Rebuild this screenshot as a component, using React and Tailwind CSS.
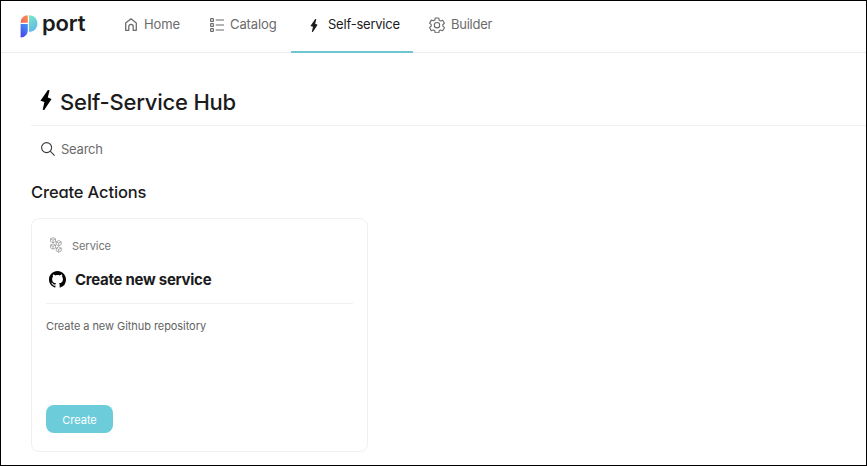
import React from "react";

function Bolt({ className }) {
  return (
    <svg viewBox="0 0 10 18" className={className} fill="currentColor">
      <path d="M6.7 0 8.2.2 6.6 6.7 10 8 3.4 18 2 17.7 3.6 10.8 0 9.7Z" />
    </svg>
  );
}

function Logo() {
  return (
    <svg viewBox="0 0 18 23" className="h-[23px] w-[18px] shrink-0">
      <defs>
        <linearGradient id="orange" x1="0" y1="1" x2="1" y2="0">
          <stop offset="0" stopColor="#f5625c" />
          <stop offset="1" stopColor="#fb924c" />
        </linearGradient>
        <linearGradient id="teal" x1="0.3" y1="0" x2="0.6" y2="1">
          <stop offset="0" stopColor="#79e6c8" />
          <stop offset="1" stopColor="#5fb5e8" />
        </linearGradient>
        <linearGradient id="blue" x1="0.3" y1="1" x2="0.7" y2="0">
          <stop offset="0" stopColor="#4a43ea" />
          <stop offset="1" stopColor="#4292f5" />
        </linearGradient>
      </defs>
      <path d="M7.8 0.3V7.7H0.6C0.6 3.7 3.6 0.3 7.8 0.3Z" fill="url(#orange)" />
      <path d="M9 0.3C14 0.3 17.4 3.8 17.4 8.4S14 16.7 9 16.7Z" fill="url(#teal)" />
      <path d="M0.6 9H7.8V15C7.8 19.3 4.8 22.5 0.6 22.5Z" fill="url(#blue)" />
    </svg>
  );
}

function HomeIcon() {
  return (
    <svg viewBox="0 0 12 13" className="mb-px h-[13px] w-3 shrink-0" fill="none" stroke="currentColor" strokeWidth="1.3">
      <path d="M.7 5 6 .8 11.3 5V12.3H8.2V8.6C8.2 7.3 7.3 6.4 6 6.4S3.8 7.3 3.8 8.6V12.3H.7Z" strokeLinejoin="round" />
    </svg>
  );
}

function CatalogIcon() {
  return (
    <svg viewBox="0 0 14 14" className="h-3.5 w-3.5 shrink-0" fill="none" stroke="currentColor" strokeWidth="1.1">
      <rect x=".6" y=".6" width="2.8" height="2.8" rx=".4" />
      <rect x=".6" y="5.6" width="2.8" height="2.8" rx=".4" />
      <rect x=".6" y="10.6" width="2.8" height="2.8" rx=".4" />
      <path d="M5.7 2H14M5.7 7H14M5.7 12H14" />
    </svg>
  );
}

function GearIcon() {
  return (
    <svg viewBox="0 0 24 24" className="h-4 w-4 shrink-0" fill="none" stroke="currentColor" strokeWidth="1.7" strokeLinejoin="round">
      <path d="M9.4 1.5h5.2l.7 3.2 2.1 1.2 3.1-1 2.6 4.5-2.4 2.2v2.2l2.4 2.2-2.6 4.5-3.1-1-2.1 1.2-.7 3.2H9.4l-.7-3.2-2.1-1.2-3.1 1L.9 15.8l2.4-2.2v-2.2L.9 9.2l2.6-4.5 3.1 1 2.1-1.2Z" />
      <circle cx="12" cy="12.3" r="4" />
    </svg>
  );
}

function Cube({ x, y }) {
  return (
    <g transform={`translate(${x} ${y})`}>
      <path d="M2.5 0 5 1.2V4L2.5 5.3 0 4V1.2ZM0 1.2 2.5 2.5 5 1.2M2.5 2.5V5.3" />
    </g>
  );
}

function CubesIcon() {
  return (
    <svg viewBox="0 0 12 16" className="h-4 w-3 shrink-0" fill="none" stroke="#858585" strokeWidth=".65" strokeLinejoin="round">
      <Cube x={0.5} y={0.6} />
      <Cube x={6.2} y={3.6} />
      <Cube x={0.5} y={6.8} />
      <Cube x={6.2} y={9.9} />
    </svg>
  );
}

function GithubIcon() {
  return (
    <svg viewBox="0 0 16 16" className="mb-px h-[17px] w-[17px] shrink-0" fill="#050505">
      <path d="M8 0C3.58 0 0 3.58 0 8c0 3.54 2.29 6.53 5.47 7.59.4.07.55-.17.55-.38V13.72c-2.01.37-2.53-.49-2.69-.94-.09-.23-.48-.94-.82-1.13-.28-.15-.68-.52-.01-.53.63-.01 1.08.58 1.23.82.72 1.21 1.87.87 2.33.66.07-.52.28-.87.51-1.07-1.78-.2-3.64-.89-3.64-3.95 0-.87.31-1.59.82-2.15-.08-.2-.36-1.02.08-2.12 0 0 .67-.21 2.2.82.64-.18 1.32-.27 2-.27s1.36.09 2 .27c1.53-1.04 2.2-.82 2.2-.82.44 1.1.16 1.92.08 2.12.51.56.82 1.27.82 2.15 0 3.07-1.87 3.75-3.65 3.95.29.25.54.73.54 1.48v2.2c0 .21.15.46.55.38A8.01 8.01 0 0 0 16 8c0-4.42-3.58-8-8-8Z" />
    </svg>
  );
}

export default function App() {
  return (
    <div className="flex h-[466px] w-[867px] flex-col overflow-hidden whitespace-nowrap border border-black bg-white font-['Inter',sans-serif] text-[#1b1b1d]">
      <header className="flex h-[52px] shrink-0 border-b border-[#ececec] pl-[19px] text-[13px] text-[#6b6b6b]">
        <div className="flex h-[50px] w-[105px] items-center">
          <Logo />
          <span className="-mt-[6px] ml-[4px] text-[22px] font-semibold leading-7 tracking-[-0.2px] text-[#1b1b1d]">port</span>
        </div>
        <nav className="flex h-[52px]">
          <a className="flex h-[48px] w-[85px] items-center gap-[7px] tracking-[-0.1px]"><HomeIcon />Home</a>
          <a className="flex h-[48px] w-[81px] items-center gap-[6px] tracking-[-0.1px]"><CatalogIcon />Catalog</a>
          <a className="flex h-[52px] w-[122px] items-center border-b-2 border-[#70c5d2] pb-[2px] pl-[19px] tracking-[-0.22px] text-[#1b1b1d]">
            <Bolt className="mr-[10px] h-[13px] w-2 shrink-0" />Self-service
          </a>
          <a className="flex h-[48px] items-center gap-[6px] pl-4 tracking-[-0.25px]"><GearIcon />Builder</a>
        </nav>
      </header>
      <main className="flex flex-col pl-[30px]">
        <div className="flex h-[73px] items-center border-b border-[#f0f0f0] pl-[9px] pt-[25px]">
          <Bolt className="mb-[3px] h-5 w-3 shrink-0 text-black" />
          <h1 className="ml-2 text-[22px] font-medium leading-7 tracking-[-0.22px] [font-feature-settings:'cv11']">Self-Service Hub</h1>
        </div>
        <div className="flex h-[47px] items-center gap-[6px] pl-[10px] text-[13px] tracking-[-0.24px] text-[#6b6b6b]">
          <svg viewBox="0 0 14 14" className="mb-px h-3.5 w-3.5 shrink-0" fill="none" stroke="#3b3b3b" strokeWidth="1.1">
            <circle cx="5.6" cy="5.6" r="5" />
            <path d="m9.2 9.2 4.4 4.4" />
          </svg>
          Search
        </div>
        <h2 className="mt-[7px] h-6 text-[16.5px] font-medium leading-6 tracking-[-0.14px] [font-feature-settings:'cv11']">Create Actions</h2>
        <section className="mt-[14px] flex h-[234px] w-[337px] flex-col rounded-lg border border-[#f0f0f0] px-[14px]">
          <div className="mt-[18px] flex h-4 items-center gap-[10px] pl-[4px] text-[11px] tracking-[-0.05px] text-[#737373]"><CubesIcon /><span className="pt-0.5">Service</span></div>
          <div className="mt-[17px] flex h-5 items-center gap-[9px] pl-[3px] text-[15px] font-bold tracking-[-0.28px]"><GithubIcon />Create new service</div>
          <div className="mt-[13px] border-t border-[#f0f0f0]" />
          <p className="mt-[14px] text-[11px] leading-4 tracking-[-0.06px] text-[#626262]">Create a new Github repository</p>
          <button className="mt-[71px] h-[28px] w-[67px] rounded-lg bg-[#6cccda] pt-0.5 text-[11px] text-white">Create</button>
        </section>
      </main>
    </div>
  );
}
